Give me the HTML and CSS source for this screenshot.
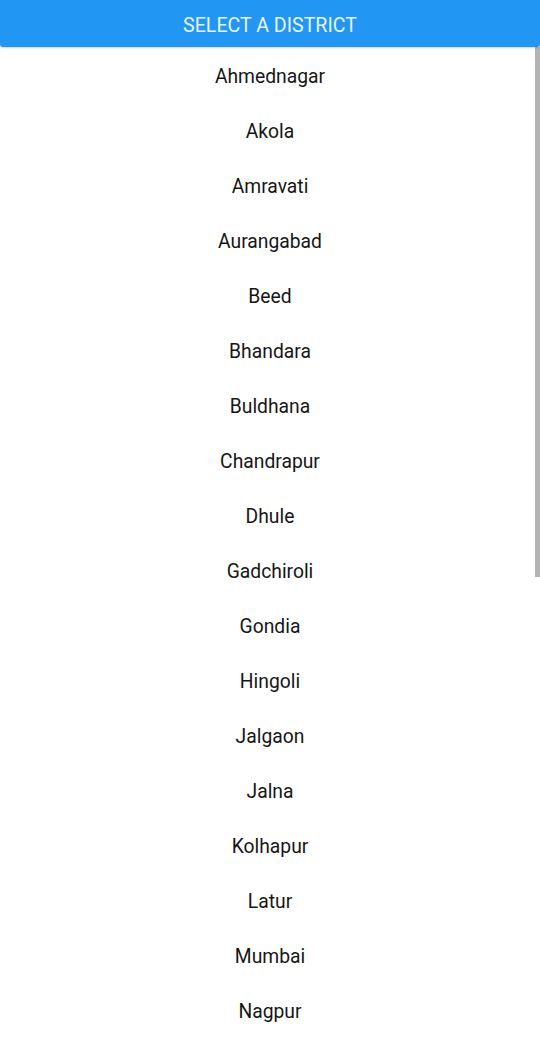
FILE: index.html
```html
<!DOCTYPE html>
<html>
<head>
<meta charset="utf-8">
<link rel="stylesheet" href="styles.css">
</head>
<body>
<div class="screen">
  <header class="bar">SELECT A DISTRICT</header>
  <div class="list-wrap">
    <ul class="list">
      <li>Ahmednagar</li>
      <li>Akola</li>
      <li>Amravati</li>
      <li>Aurangabad</li>
      <li>Beed</li>
      <li>Bhandara</li>
      <li>Buldhana</li>
      <li>Chandrapur</li>
      <li>Dhule</li>
      <li>Gadchiroli</li>
      <li>Gondia</li>
      <li>Hingoli</li>
      <li>Jalgaon</li>
      <li>Jalna</li>
      <li>Kolhapur</li>
      <li>Latur</li>
      <li>Mumbai</li>
      <li>Nagpur</li>
    </ul>
    <div class="scrollbar"></div>
  </div>
</div>
</body>
</html>
```
FILE: styles.css
```css
html, body {
  margin: 0;
  padding: 0;
  background: #fff;
}
.screen {
  width: 540px;
  height: 1056px;
  display: flex;
  flex-direction: column;
  overflow: hidden;
  font-family: Roboto, "Noto Sans", sans-serif;
}
.bar {
  height: 47px;
  box-sizing: border-box;
  padding-top: 3px;
  flex: none;
  background: #2196f3;
  color: #e8f3fd;
  font-size: 19.6px;
  display: flex;
  align-items: center;
  justify-content: center;
  border-radius: 0 0 3px 3px;
  box-shadow: 0 1px 2px rgba(0,0,0,0.18);
  position: relative;
  z-index: 1;
}
.list-wrap {
  position: relative;
  flex: 1;
  overflow: hidden;
}
.list {
  list-style: none;
  margin: 0;
  padding: 2px 0 0;
}
.list li {
  height: 55px;
  display: flex;
  align-items: center;
  justify-content: center;
  font-size: 19.3px;
  color: #161616;
}
.scrollbar {
  position: absolute;
  right: 0;
  top: 0;
  width: 5px;
  height: 530px;
  background: #b3b3b3;
}
```
